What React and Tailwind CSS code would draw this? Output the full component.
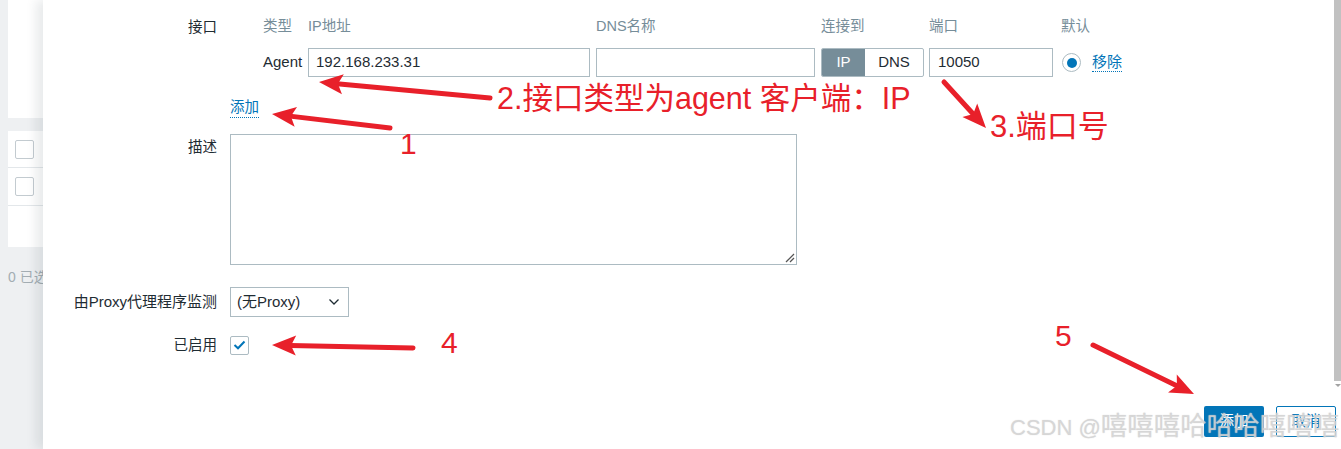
import React from "react";

const FONT = { fontFamily: '"Liberation Sans", Arial, "Noto Sans CJK SC", sans-serif' };

function Arrow({ x1, y1, x2, y2, head = 24, half = 10 }) {
  const dx = x2 - x1;
  const dy = y2 - y1;
  const len = Math.hypot(dx, dy);
  const ux = dx / len;
  const uy = dy / len;
  const bx = x2 - ux * head;
  const by = y2 - uy * head;
  const px = -uy;
  const py = ux;
  const pts = `${x2},${y2} ${bx + px * half},${by + py * half} ${bx + ux * 5},${by + uy * 5} ${bx - px * half},${by - py * half}`;
  return (
    <g>
      <line x1={x1} y1={y1} x2={bx + ux * 6} y2={by + uy * 6} stroke="#e8202a" strokeWidth="5" strokeLinecap="round" />
      <polygon points={pts} fill="#e8202a" />
    </g>
  );
}

function LeftStrip() {
  return (
    <div className="w-[43px] shrink-0 bg-[#eef0f2] flex flex-col pl-[8px]">
      <div className="h-[118px] bg-white" />
      <div className="mt-[13px] bg-white h-[37px] border-b border-[#e3e7ea] flex items-center pl-[7px]">
        <div className="w-[19px] h-[19px] border border-[#c3cbd0] rounded-[2px]" />
      </div>
      <div className="bg-white h-[38px] border-b border-[#e3e7ea] flex items-center pl-[7px]">
        <div className="w-[19px] h-[19px] border border-[#c3cbd0] rounded-[2px]" />
      </div>
      <div className="bg-white h-[41px]" />
      <div className="mt-[21px] text-[14px] text-[#a3adb3] whitespace-nowrap leading-[18px]">0 已选</div>
    </div>
  );
}

function Label({ children, className = "" }) {
  return (
    <div className={"w-[174px] shrink-0 text-right text-[14.5px] text-[#1f2c33] leading-[20px] " + className}>{children}</div>
  );
}

export default function App() {
  return (
    <div className="relative flex h-[449px] w-[1341px] overflow-hidden bg-white" style={FONT}>
      <LeftStrip />
      <div className="relative z-10 flex flex-1 flex-col bg-white shadow-[-7px_0_10px_rgba(40,60,70,0.10)]">
        <div className="flex h-[390px]">
          <div className="flex-1 pt-[17px]">
            {/* Interface row */}
            <div className="flex">
              <Label>接口</Label>
              <div className="ml-[13px] flex flex-col">
                <div className="flex h-[20px] items-center text-[14.5px] text-[#768d99]">
                  <div className="w-[33px]" />
                  <div className="w-[45px]">类型</div>
                  <div className="w-[288px]">IP地址</div>
                  <div className="w-[225px]">DNS名称</div>
                  <div className="w-[108px]">连接到</div>
                  <div className="w-[132px]">端口</div>
                  <div>默认</div>
                </div>
                <div className="mt-[11px] flex h-[29px] items-center text-[15px] text-[#1f2c33]">
                  <div className="w-[33px]" />
                  <div className="w-[45px]">Agent</div>
                  <div className="w-[288px]">
                    <div className="flex h-[29px] w-[282px] items-center border border-[#acbbc2] px-[7px]">192.168.233.31</div>
                  </div>
                  <div className="w-[225px]">
                    <div className="h-[29px] w-[219px] border border-[#acbbc2]" />
                  </div>
                  <div className="w-[108px]">
                    <div className="flex h-[29px] w-[103px] overflow-hidden rounded-[2px] border border-[#acbbc2]">
                      <div className="flex w-[43px] items-center justify-center bg-[#768d99] text-white">IP</div>
                      <div className="flex flex-1 items-center justify-center text-[#1f2c33]">DNS</div>
                    </div>
                  </div>
                  <div className="w-[132px]">
                    <div className="flex h-[29px] w-[124px] items-center border border-[#acbbc2] px-[8px]">10050</div>
                  </div>
                  <div className="flex items-center">
                    <div className="ml-[1px] flex h-[19px] w-[19px] items-center justify-center rounded-full border border-[#acbbc2] bg-white">
                      <div className="h-[10px] w-[10px] rounded-full bg-[#0275b8]" />
                    </div>
                    <span className="ml-[11px] border-b border-dotted border-[#0275b8] leading-[18px] text-[#0275b8]">移除</span>
                  </div>
                </div>
                <div className="mt-[18px] h-[20px]">
                  <span className="inline-block border-b border-dotted border-[#0275b8] text-[14.5px] leading-[19px] text-[#0275b8]">添加</span>
                </div>
              </div>
            </div>

            {/* Description */}
            <div className="mt-[19px] flex">
              <Label className="pt-[3px]">描述</Label>
              <div className="relative ml-[13px] h-[131px] w-[567px] border border-[#acbbc2]">
                <svg className="absolute bottom-[1px] right-[1px]" width="11" height="11" viewBox="0 0 11 11">
                  <line x1="2" y1="10" x2="10" y2="2" stroke="#555" strokeWidth="1.2" />
                  <line x1="6" y1="10" x2="10" y2="6" stroke="#555" strokeWidth="1.2" />
                </svg>
              </div>
            </div>

            {/* Proxy */}
            <div className="mt-[22px] flex items-center">
              <Label className="text-[15px]">由Proxy代理程序监测</Label>
              <div className="ml-[13px] flex h-[30px] w-[119px] items-center justify-between border border-[#acbbc2] pl-[6px] pr-[8px] text-[15px] text-[#1f2c33]">
                <span>(无Proxy)</span>
                <svg width="12" height="8" viewBox="0 0 12 8">
                  <polyline points="1.5,1.5 6,6 10.5,1.5" fill="none" stroke="#1f2c33" strokeWidth="1.3" />
                </svg>
              </div>
            </div>

            {/* Enabled */}
            <div className="mt-[18px] flex items-center">
              <Label>已启用</Label>
              <div className="ml-[13px] flex h-[19px] w-[19px] items-center justify-center rounded-[2px] border border-[#acbbc2]">
                <svg width="13" height="10" viewBox="0 0 13 10">
                  <polyline points="1.5,5 5,8.3 11.5,1.5" fill="none" stroke="#0275b8" strokeWidth="2" />
                </svg>
              </div>
            </div>
          </div>
          {/* scrollbar */}
          <div className="w-[7px] shrink-0 flex flex-col items-center">
            <div className="h-[381px] w-full bg-[#c1c1c1]" />
            <div className="mt-[3px] h-0 w-0 border-l-[3px] border-r-[3px] border-t-[3px] border-l-transparent border-r-transparent border-t-[#a3a3a3]" />
          </div>
        </div>
        <div className="flex justify-end gap-[12px] pr-[5px] pt-[16px]">
          <div className="flex h-[31px] w-[60px] items-center justify-center rounded-[2px] bg-[#0275b8] text-[14.5px] text-white">添加</div>
          <div className="flex h-[31px] w-[60px] items-center justify-center rounded-[2px] border border-[#0275b8] bg-white text-[14.5px] text-[#0275b8]">取消</div>
        </div>
      </div>

      {/* annotations overlay */}
      <svg className="pointer-events-none absolute left-0 top-0 z-20" width="1341" height="449">
        <Arrow x1={490} y1={98} x2={319} y2={82} />
        <Arrow x1={390} y1={128} x2={272} y2={114} />
        <Arrow x1={944} y1={82} x2={986} y2={128} />
        <Arrow x1={413} y1={348} x2={272} y2={345} />
        <Arrow x1={1093} y1={345} x2={1194} y2={394} />
      </svg>
      <div className="pointer-events-none absolute left-[497px] top-[80px] z-20 whitespace-nowrap text-[30.5px] leading-[36px] text-[#e8202a]">2.接口类型为agent 客户端：IP</div>
      <div className="pointer-events-none absolute left-[400px] top-[126px] z-20 text-[30px] leading-[36px] text-[#e8202a]">1</div>
      <div className="pointer-events-none absolute left-[990px] top-[109px] z-20 whitespace-nowrap text-[31px] leading-[36px] text-[#e8202a]">3.端口号</div>
      <div className="pointer-events-none absolute left-[441px] top-[325px] z-20 text-[30px] leading-[36px] text-[#e8202a]">4</div>
      <div className="pointer-events-none absolute left-[1055px] top-[318px] z-20 text-[30px] leading-[36px] text-[#e8202a]">5</div>
      <div
        className="pointer-events-none absolute left-[1010px] top-[410px] z-30 whitespace-nowrap leading-[32px] text-[rgba(190,190,190,0.55)]"
        style={{ textShadow: "0 0 1px rgba(255,255,255,0.8), 0 0 1px rgba(140,140,140,0.4)" }}
      >
        <span className="text-[22px]">CSDN @</span>
        <span className="text-[26.5px]">嘻嘻嘻哈哈哈嘻嘻嘻</span>
      </div>
    </div>
  );
}
